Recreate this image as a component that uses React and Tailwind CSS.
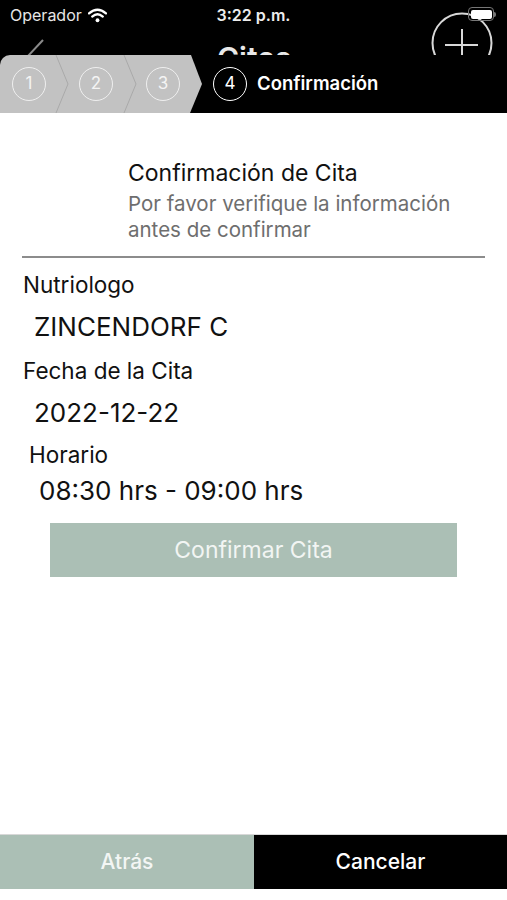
import React from 'react';

const StepCircle = ({ n, active }) => (
    <div className={`w-[34px] h-[34px] rounded-full border-[1.5px] flex items-center justify-center text-[17px] shrink-0 ${active ? 'border-white text-white' : 'border-[#efefef] text-[#f4f4f4]'}`}>
        {n}
    </div>
);

const Chevron = () => (
    <svg width="14" height="58" viewBox="0 0 14 58" className="shrink-0">
        <polyline points="1,0 13,29 1,58" fill="none" stroke="#a9a9a9" strokeWidth="1" />
    </svg>
);

export default function App() {
    return (
        <div className="w-full h-[900px] bg-white flex flex-col font-['Inter',sans-serif]">
            {/* status + nav bar */}
            <div className="relative h-[55px] bg-black overflow-hidden shrink-0">
                <div className="grid grid-cols-3 items-center h-[30px] px-[10px] text-[16px] text-[#e6e6e6]">
                    <div className="flex items-center">
                        <span>Operador</span>
                        <svg width="19" height="15" viewBox="0 0 18 14" className="ml-[6px]">
                            <path d="M1 5 Q9 -2 17 5" fill="none" stroke="#fff" strokeWidth="2.2" strokeLinecap="round" />
                            <path d="M4 8 Q9 3.5 14 8" fill="none" stroke="#fff" strokeWidth="2.2" strokeLinecap="round" />
                            <circle cx="9" cy="11.5" r="1.8" fill="#fff" />
                        </svg>
                    </div>
                    <span className="text-center font-semibold text-[#ededed]">3:22 p.m.</span>
                    <div />
                </div>
                {/* back arrow, mostly covered */}
                <svg width="30" height="30" viewBox="0 0 30 30" className="absolute left-[22px] top-[36px]">
                    <line x1="21" y1="4" x2="6" y2="20" stroke="#8a8a8a" strokeWidth="2" />
                </svg>
                {/* large title, clipped by the steps bar */}
                <div className="absolute left-[217px] top-[43px] text-[30px] font-semibold text-[#e8e8e8] leading-none">Citas</div>
                {/* add button */}
                <svg width="64" height="64" viewBox="0 0 64 64" className="absolute left-[430px] top-[11px]">
                    <circle cx="32" cy="32" r="29.5" fill="none" stroke="#d8d8d8" strokeWidth="2" />
                    <line x1="32" y1="18" x2="32" y2="52" stroke="#d8d8d8" strokeWidth="2" />
                    <line x1="15" y1="34" x2="48" y2="34" stroke="#d8d8d8" strokeWidth="2" />
                </svg>
                {/* battery */}
                <div className="absolute left-[468px] top-[7px] flex items-center">
                    <div className="w-[26px] h-[14px] rounded-[4px] border border-[#777] p-[1.5px]">
                        <div className="w-full h-full rounded-[2px] bg-white" />
                    </div>
                    <div className="w-[2px] h-[5px] bg-[#777] rounded-r-sm" />
                </div>
            </div>

            {/* steps bar */}
            <div className="relative h-[58px] bg-black flex items-center shrink-0">
                <div className="h-full w-[202px] bg-[#c2c2c2] rounded-tl-[10px] [clip-path:polygon(0_0,191px_0,202px_29px,190px_58px,0_58px)] flex items-center pl-[12px]">
                    <StepCircle n="1" />
                    <div className="ml-[9px]"><Chevron /></div>
                    <div className="ml-[10px]"><StepCircle n="2" /></div>
                    <div className="ml-[10px]"><Chevron /></div>
                    <div className="ml-[9px]"><StepCircle n="3" /></div>
                </div>
                <div className="ml-[11px]"><StepCircle n="4" active /></div>
                <span className="ml-[10px] text-[18.5px] font-semibold text-white">Confirmación</span>
            </div>

            {/* content */}
            <div className="flex flex-col">
                <div className="pl-[128px] pt-[47px]">
                    <div className="text-[23px] text-[#111] leading-[26px]">Confirmación de Cita</div>
                    <div className="mt-[5px] text-[20.5px] text-[#6e6e6e] leading-[26px]">
                        Por favor verifique la información<br />antes de confirmar
                    </div>
                </div>
                <div className="mx-[22px] mt-[13px] h-[2px] bg-[#8c8c8c]" />

                <div className="mt-[14px] pl-[23px] text-[22.5px] text-[#111] leading-[26px]">Nutriologo</div>
                <div className="mt-[14px] pl-[34px] text-[26px] text-[#111] leading-[30px]">ZINCENDORF C</div>

                <div className="mt-[16px] pl-[23px] text-[22.5px] text-[#111] leading-[26px]">Fecha de la Cita</div>
                <div className="mt-[14px] pl-[34px] text-[26px] text-[#111] leading-[30px]">2022-12-22</div>

                <div className="mt-[14px] pl-[29px] text-[22.5px] text-[#111] leading-[26px]">Horario</div>
                <div className="mt-[8px] pl-[39px] text-[26px] text-[#111] leading-[30px]">08:30 hrs - 09:00 hrs</div>

                <button className="mx-[50px] mt-[17px] h-[54px] bg-[#abbfb5] text-[23px] text-[#f2f5f3] flex items-center justify-center">
                    Confirmar Cita
                </button>
            </div>

            {/* bottom actions */}
            <div className="mt-auto mb-[11px] h-[55px] flex border-t border-[#d8d8d8] shrink-0">
                <button className="w-[254px] bg-[#abbfb5] text-[21px] font-medium text-[#f3f6f4] flex items-center justify-center">Atrás</button>
                <button className="flex-1 bg-black text-[21px] font-medium text-white flex items-center justify-center">Cancelar</button>
            </div>
        </div>
    );
}
